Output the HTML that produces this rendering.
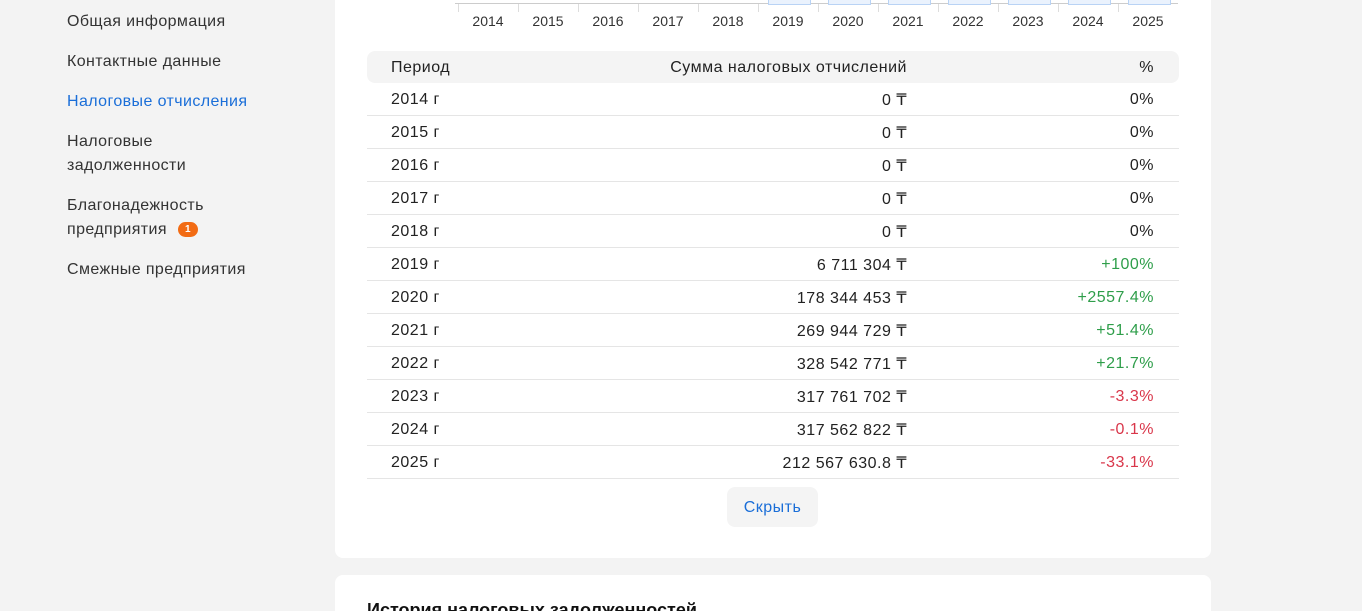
<!DOCTYPE html>
<html><head><meta charset="utf-8"><style>
html,body{margin:0;width:1362px;height:611px;overflow:hidden}
body{background:#f3f3f3;font-family:"Liberation Sans",sans-serif;position:relative;color:#222}
.nav{position:absolute;left:67px;font-size:16px;letter-spacing:0.4px;color:#333;line-height:24px}
.card{position:absolute;left:335px;width:876px;background:#fff;border-radius:8px}
.yr{position:absolute;top:13px;font-size:14px;color:#333;width:60px;text-align:center}
.tk{position:absolute;top:4px;width:1px;height:8px;background:#ddd}
.bar{position:absolute;top:-5px;height:9px;background:#eaf2fd;border:1px solid #b9d3f5;border-top:none;width:41px}
table{position:absolute;left:32px;width:812px;border-collapse:collapse;font-size:16px;letter-spacing:0.5px;table-layout:fixed}
td,th{height:30px;padding:2px 0 0 0;border-bottom:1px solid #e5e5e5}
th{font-weight:normal;background:#f4f4f4;border:none;height:30px}
th:first-child{border-radius:8px 0 0 8px}th:last-child{border-radius:0 8px 8px 0}
.c1{padding-left:24px;text-align:left}
.c2{text-align:right}
.c3{text-align:right;padding-right:25px}
.g{color:#2e9e4a}.r{color:#d9364a}
</style></head><body>
<div class="nav" style="top:10px">Общая информация</div>
<div class="nav" style="top:50px">Контактные данные</div>
<div class="nav" style="top:90px;color:#1a6ed8">Налоговые отчисления</div>
<div class="nav" style="top:130px">Налоговые<br>задолженности</div>
<div class="nav" style="top:194px">Благонадежность<br>предприятия <span style="display:inline-block;background:#f26b13;color:#fff;font-size:10px;font-weight:bold;letter-spacing:0;border-radius:8px;width:20px;height:15px;line-height:15px;text-align:center;vertical-align:2px;margin-left:6px">1</span></div>
<div class="nav" style="top:258px">Смежные предприятия</div>
<div class="card" style="top:-10px;height:568px">
<div style="position:absolute;left:104px;top:-2px;font-size:13px;color:#333">0</div>
<div style="position:absolute;left:120px;top:13px;width:723px;height:1px;background:#ccc"></div>
<div style="position:absolute;left:0;top:10px;width:876px">
<div class="bar" style="left:433px"></div><div class="bar" style="left:493px"></div><div class="bar" style="left:553px"></div><div class="bar" style="left:613px"></div><div class="bar" style="left:673px"></div><div class="bar" style="left:733px"></div><div class="bar" style="left:793px"></div>
<div class="tk" style="left:123px"></div><div class="tk" style="left:183px"></div><div class="tk" style="left:243px"></div><div class="tk" style="left:303px"></div><div class="tk" style="left:363px"></div><div class="tk" style="left:423px"></div><div class="tk" style="left:483px"></div><div class="tk" style="left:543px"></div><div class="tk" style="left:603px"></div><div class="tk" style="left:663px"></div><div class="tk" style="left:723px"></div><div class="tk" style="left:783px"></div>
<div class="yr" style="left:123px">2014</div><div class="yr" style="left:183px">2015</div><div class="yr" style="left:243px">2016</div><div class="yr" style="left:303px">2017</div><div class="yr" style="left:363px">2018</div><div class="yr" style="left:423px">2019</div><div class="yr" style="left:483px">2020</div><div class="yr" style="left:543px">2021</div><div class="yr" style="left:603px">2022</div><div class="yr" style="left:663px">2023</div><div class="yr" style="left:723px">2024</div><div class="yr" style="left:783px">2025</div>
</div>
<table style="top:61px">
<colgroup><col style="width:224px"><col style="width:316px"><col></colgroup>
<tr><th class="c1">Период</th><th class="c2">Сумма налоговых отчислений</th><th class="c3">%</th></tr>
<tr><td class="c1">2014 г</td><td class="c2">0 ₸</td><td class="c3">0%</td></tr>
<tr><td class="c1">2015 г</td><td class="c2">0 ₸</td><td class="c3">0%</td></tr>
<tr><td class="c1">2016 г</td><td class="c2">0 ₸</td><td class="c3">0%</td></tr>
<tr><td class="c1">2017 г</td><td class="c2">0 ₸</td><td class="c3">0%</td></tr>
<tr><td class="c1">2018 г</td><td class="c2">0 ₸</td><td class="c3">0%</td></tr>
<tr><td class="c1">2019 г</td><td class="c2">6 711 304 ₸</td><td class="c3 g">+100%</td></tr>
<tr><td class="c1">2020 г</td><td class="c2">178 344 453 ₸</td><td class="c3 g">+2557.4%</td></tr>
<tr><td class="c1">2021 г</td><td class="c2">269 944 729 ₸</td><td class="c3 g">+51.4%</td></tr>
<tr><td class="c1">2022 г</td><td class="c2">328 542 771 ₸</td><td class="c3 g">+21.7%</td></tr>
<tr><td class="c1">2023 г</td><td class="c2">317 761 702 ₸</td><td class="c3 r">-3.3%</td></tr>
<tr><td class="c1">2024 г</td><td class="c2">317 562 822 ₸</td><td class="c3 r">-0.1%</td></tr>
<tr><td class="c1">2025 г</td><td class="c2">212 567 630.8 ₸</td><td class="c3 r">-33.1%</td></tr>
</table>
<div style="position:absolute;left:392px;top:497px;width:91px;height:40px;background:#f4f4f4;border-radius:8px;color:#1a6ed8;font-size:16px;letter-spacing:0.5px;line-height:42px;text-align:center">Скрыть</div>
</div>
<div class="card" style="top:575px;height:60px">
<div style="position:absolute;left:32px;top:25px;font-size:18px;font-weight:bold;color:#111">История налоговых задолженностей</div>
</div>
</body></html>
